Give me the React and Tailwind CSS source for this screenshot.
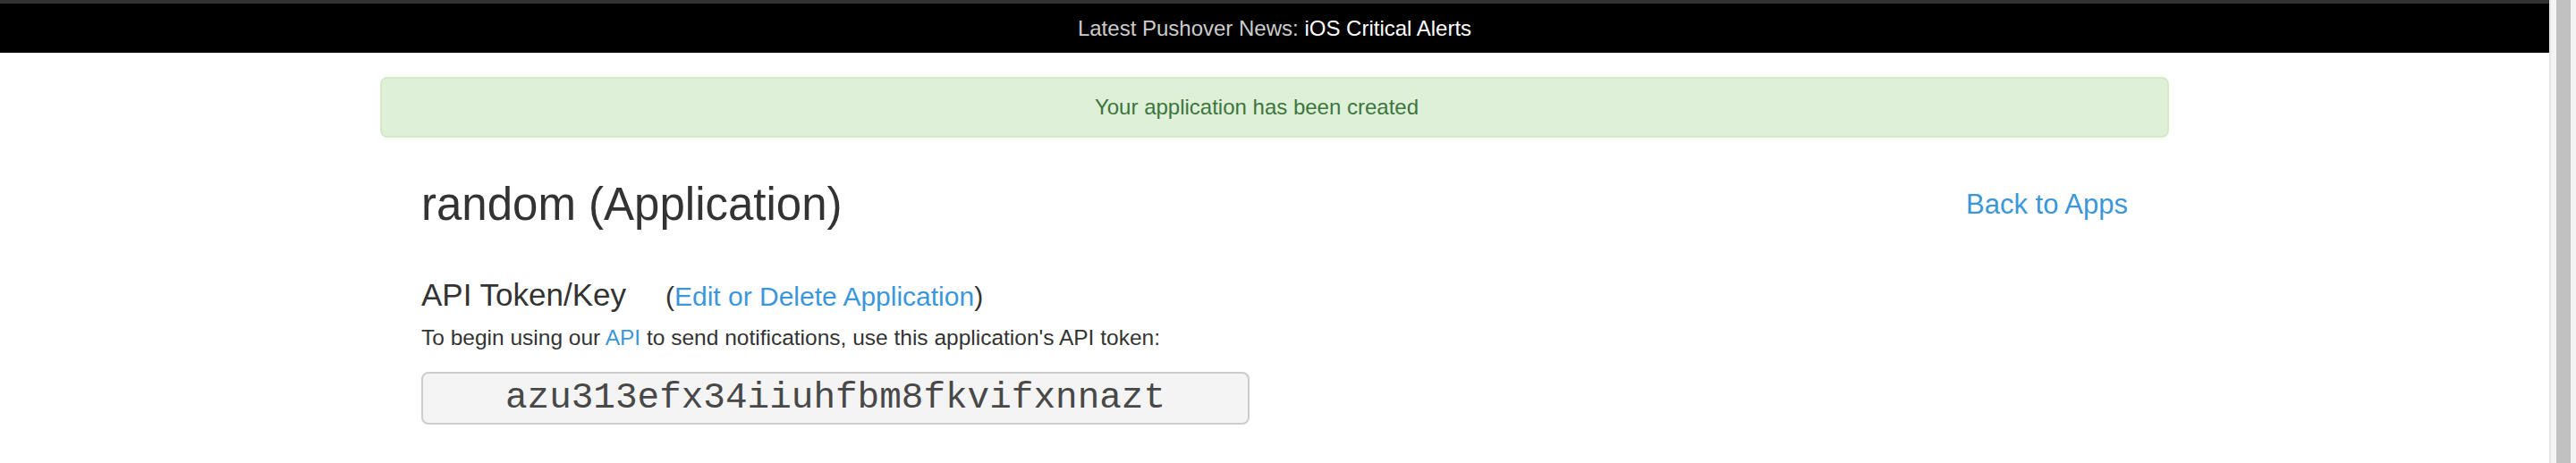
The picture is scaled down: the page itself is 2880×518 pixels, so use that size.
import React from 'react';

const sans = { fontFamily: '"Liberation Sans", Arial, sans-serif' };

export default function App() {
    return (
        <div className="flex h-[518px] w-full bg-white text-[#333]" style={sans}>
            <div className="flex-1 min-w-0">
                {/* news banner */}
                <div className="h-[59px] border-t-[4px] border-[#333] bg-black flex items-center justify-center text-[24px]">
                    <span className="text-[#cccccc]">Latest Pushover News:&nbsp;</span>
                    <a href="#" className="text-white">iOS Critical Alerts</a>
                </div>

                <div className="w-[2000px] mx-auto mt-[27px]">
                    <div className="h-[68px] pr-[40px] rounded-[8px] border-2 border-[#d6e9c6] bg-[#dff0d8] flex items-center justify-center text-[24px] text-[#3c763d]">
                        Your application has been created
                    </div>

                    <div className="px-[46px]">
                        <div className="mt-[45px] flex items-center justify-between h-[60px]">
                            <h1 className="text-[51px] leading-[60px]">random (Application)</h1>
                            <a href="#" className="text-[31px] text-[#3b97d9]">Back to Apps</a>
                        </div>

                        <div className="mt-[49px] flex items-baseline h-[44px] leading-[44px]">
                            <h2 className="text-[35px]">API Token/Key</h2>
                            <span className="ml-[44px] text-[30px]">
                                (<a href="#" className="text-[#3b97d9]">Edit or Delete Application</a>)
                            </span>
                        </div>

                        <p className="mt-[10px] text-[24.5px] leading-[32px]">
                            To begin using our <a href="#" className="text-[#3b97d9]">API</a> to send notifications, use this application's API token:
                        </p>

                        <div
                            className="mt-[22px] w-[926px] h-[59px] rounded-[8px] border-2 border-[#cccccc] bg-[#f4f4f4] flex items-center justify-center text-[41px] text-[#484848]"
                            style={{ fontFamily: '"Liberation Mono", "Courier New", monospace' }}
                        >
                            azu313efx34iiuhfbm8fkvifxnnazt
                        </div>
                    </div>
                </div>
            </div>

            {/* scrollbar */}
            <div className="w-[30px] h-full border-l-2 border-[#e6e6e6] bg-[#f4f4f4] flex justify-center">
                <div className="w-[16px] h-full bg-[#c1c1c1]" />
            </div>
        </div>
    );
}
